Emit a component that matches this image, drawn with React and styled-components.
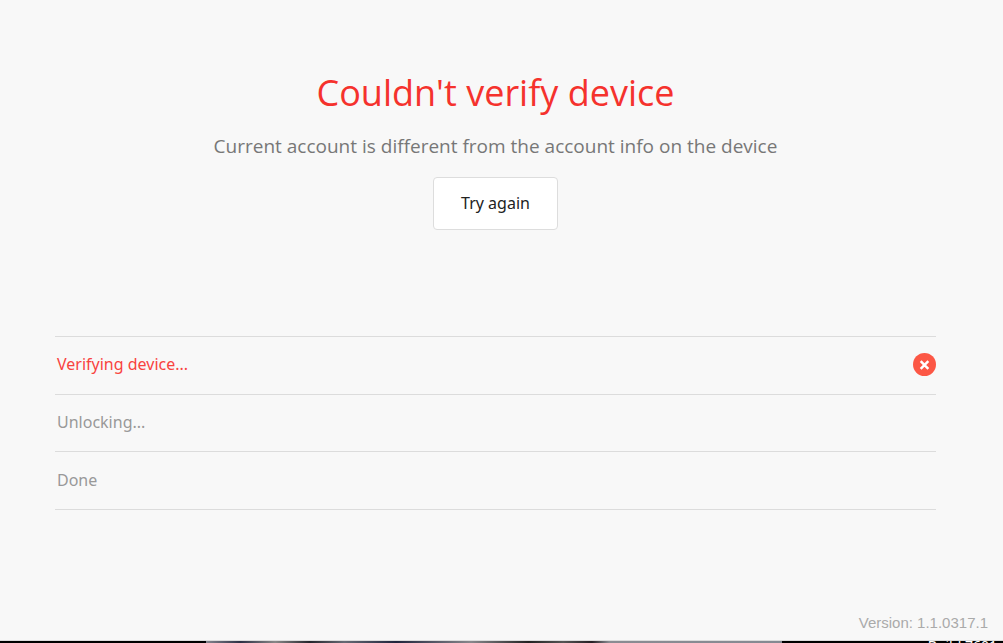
import React from 'react'
import styled, { createGlobalStyle } from 'styled-components'

const steps = [
  { label: 'Verifying device...', failed: true },
  { label: 'Unlocking...', failed: false },
  { label: 'Done', failed: false },
]

function ErrorIcon() {
  return (
    <Icon viewBox="0 0 24 24" role="img" aria-label="Failed">
      <circle cx="12" cy="12" r="12" fill="#fc5745" />
      <path d="M8 8.5L16 16.5M16 8.5L8 16.5" stroke="#fff" strokeWidth="2.6" />
    </Icon>
  )
}

function App() {
  return (
    <Page>
      <GlobalStyle />
      <Main>
        <Title>Couldn't verify device</Title>
        <Message>Current account is different from the account info on the device</Message>
        <Button type="button">Try again</Button>
        <StepList>
          {steps.map((step) => (
            <Step key={step.label} $failed={step.failed}>
              {step.label}
              {step.failed && <ErrorIcon />}
            </Step>
          ))}
        </StepList>
      </Main>
      <Version>Version: 1.1.0317.1</Version>
      <Desktop>
        <Wallpaper />
        <Watermark>Build 7601</Watermark>
      </Desktop>
    </Page>
  )
}

const GlobalStyle = createGlobalStyle`
  body {
    margin: 0;
    background: #f8f8f8;
    font-family: "Noto Sans", "Open Sans", sans-serif;
  }
`

const Page = styled.div`
  display: flex;
  flex-direction: column;
  min-height: 100vh;
`

const Main = styled.main`
  display: flex;
  flex-direction: column;
  flex: 1;
  align-items: center;
  padding: 68px 67px 0 55px;
`

const Title = styled.h1`
  margin: 0;
  color: #f5322d;
  font-family: "Open Sans", sans-serif;
  font-size: 36px;
  font-weight: 400;
  line-height: 50px;
`

const Message = styled.p`
  margin: 15px 0 18px;
  color: #777;
  font-family: "Open Sans", sans-serif;
  font-size: 19px;
  line-height: 26px;
`

const Button = styled.button`
  padding: 13px 27px;
  border: 1px solid #ddd;
  border-radius: 4px;
  background: #fff;
  color: #222;
  font-family: inherit;
  font-size: 16px;
  line-height: 25px;
  cursor: pointer;
`

const StepList = styled.ul`
  display: grid;
  grid-auto-rows: 1fr;
  align-self: stretch;
  height: 173px;
  margin: 106px 0 0;
  padding: 0;
  border-top: 1px solid #dcdcdc;
  list-style: none;
`

const Step = styled.li`
  display: flex;
  align-items: center;
  justify-content: space-between;
  padding: 0 0 2px 2px;
  border-bottom: 1px solid #dcdcdc;
  color: ${(props) => (props.$failed ? '#f8433f' : '#999')};
  font-size: 16px;
`

const Icon = styled.svg`
  width: 23px;
  height: 23px;
`

const Version = styled.footer`
  padding: 0 15px 8px;
  color: #aaa;
  font-family: "Liberation Sans", Arial, sans-serif;
  font-size: 15px;
  line-height: 18px;
  text-align: right;
`

const Desktop = styled.div`
  display: flex;
  justify-content: flex-end;
  height: 2px;
  border-top: 1px solid #dcdcdc;
  background: #000;
  overflow: hidden;
`

const Wallpaper = styled.div`
  flex: 1;
  margin: 0 146px 0 206px;
  background: linear-gradient(90deg, #85868f, #2c3044 6%, #888 12%, #24252c 18%, #666a74 24%, #20243c 33%, #88888c 46%, #222 56%, #555 62%, #251f24 67%, #8a8c92 70%, #858a92);
`

const Watermark = styled.span`
  padding-right: 6px;
  color: #fff;
  font-size: 14px;
  line-height: 10px;
`

export default App
